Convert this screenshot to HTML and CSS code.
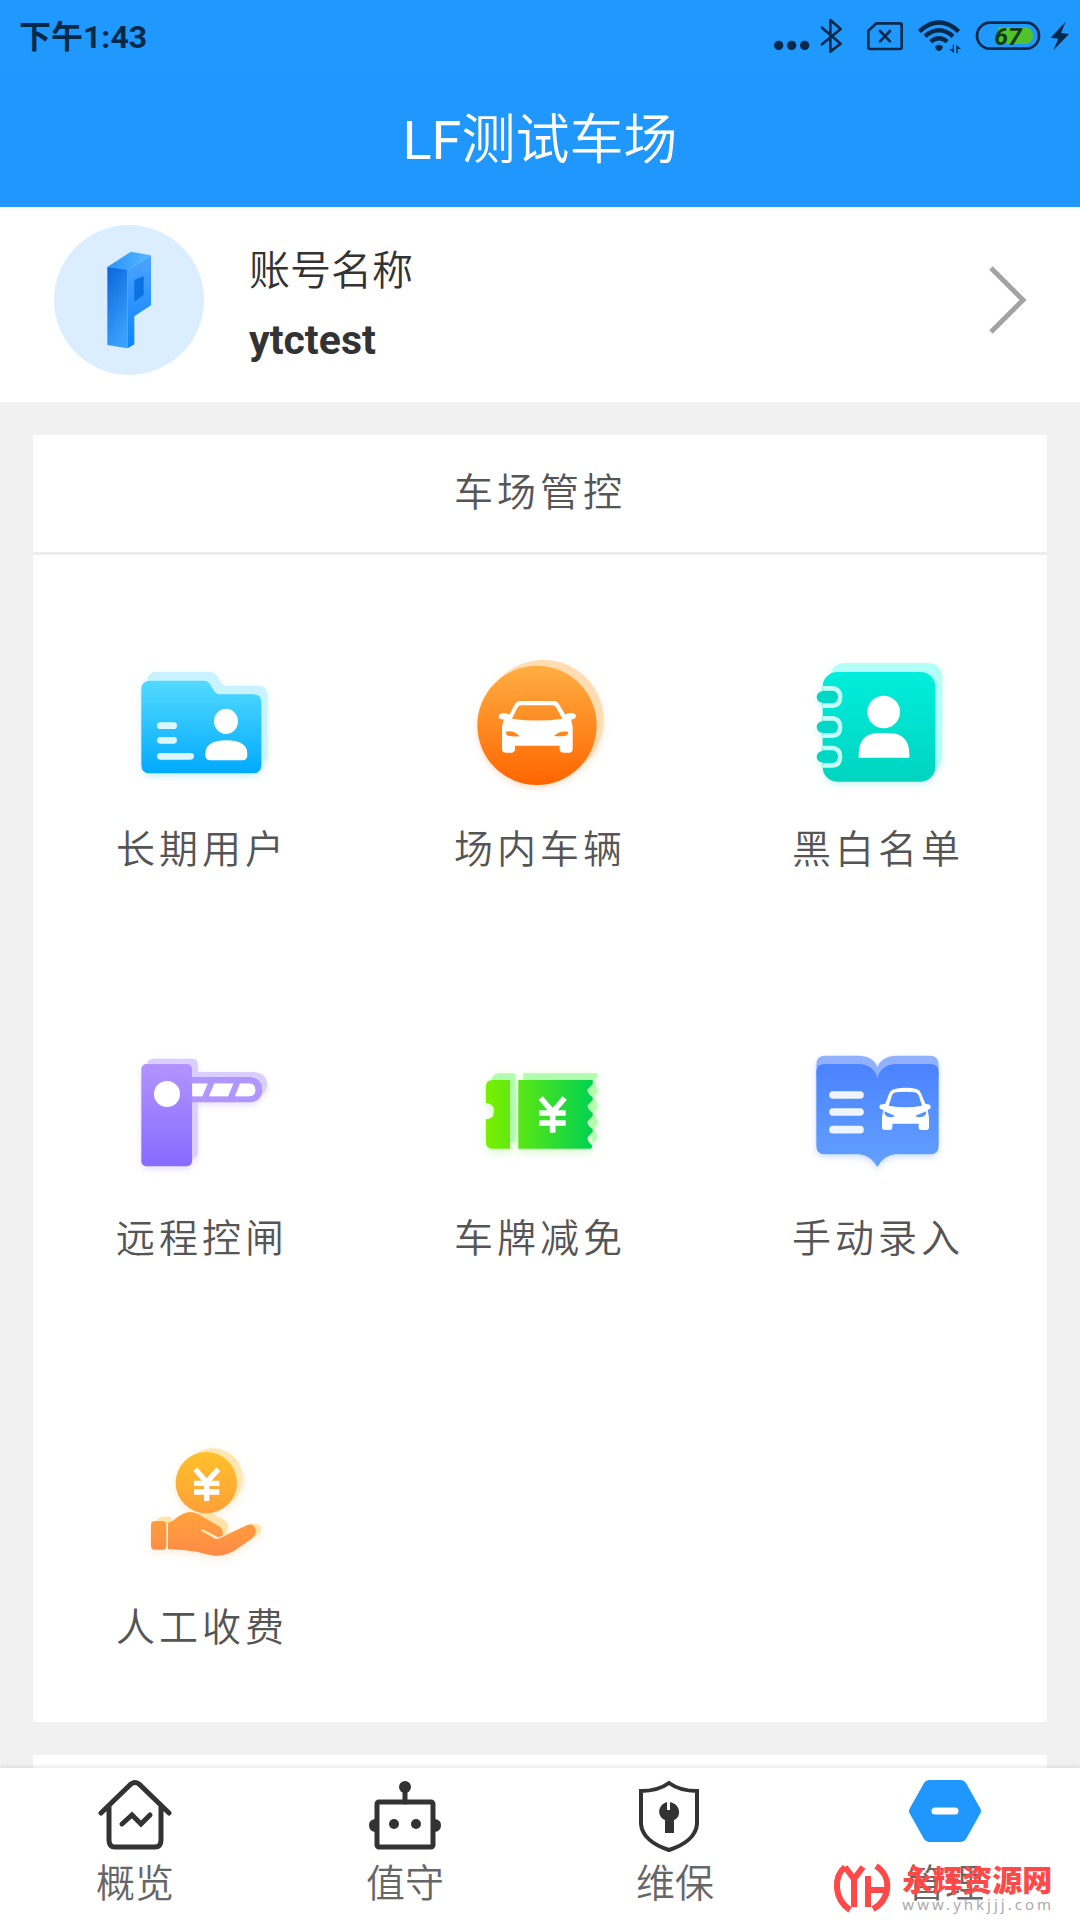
FILE: index.html
```html
<!DOCTYPE html>
<html lang="zh-CN">
<head>
	<meta charset="utf-8">
	<meta name="viewport" content="width=device-width, initial-scale=1">
	<title>LF测试车场</title>
	<link rel="stylesheet" href="styles.css">
</head>
<body>
	<div class="status">
		<span class="time">下午1:43</span>
		<div class="status-icons">
			<svg width="40" height="34" viewBox="90 57 120 102"><circle cx="116" cy="136" r="14"/><circle cx="155" cy="136" r="14"/><circle cx="194" cy="136" r="14"/></svg>
			<svg width="36" height="34" viewBox="234 57 108 102"><path class="line" d="M246 83L302 131L271 155V60L302 87L246 133"/></svg>
			<svg width="46" height="34" viewBox="366 57 138 102"><path class="line" d="M409 70H480Q485 70 485 75V142Q485 147 480 147H390Q385 147 385 142V92ZM420 93L450 124M450 93L420 124"/></svg>
			<svg width="50" height="34" viewBox="528 57 150 102">
				<path class="wave" d="M538 94Q597 41 656 94M555 109Q597 73 639 109M572 125Q597 104 622 125"/>
				<path d="M585 140Q597 129 609 140Q605 153 597 153Q589 153 585 140ZM638 134H642V160L628 147H638ZM649 160V134L663 147H653V160Z"/>
			</svg>
			<svg width="68" height="34" viewBox="702 57 204 102">
				<path class="charge" d="M775 81H850Q879 81 879 107Q879 132 850 132H770Z"/>
				<rect class="line" x="711" y="68" width="186" height="78" rx="39"/>
				<text class="level" x="763" y="134">67</text>
			</svg>
			<svg width="20" height="34" viewBox="930 57 60 102"><path d="M978 64L932 113L955 116L940 151L987 102L963 99Z"/></svg>
		</div>
	</div>
	<header class="navbar">
		<h1><span>LF</span>测试车场</h1>
	</header>

	<main>
		<a class="profile" href="#account">
			<svg class="avatar" viewBox="162 675 450 450">
				<defs>
					<linearGradient id="pSide" x2=".4" y2="1"><stop offset="0" stop-color="#0966dc"/><stop offset="1" stop-color="#3a9ffb"/></linearGradient>
					<linearGradient id="pFront" x2="0" y2="1"><stop offset="0" stop-color="#4fa4ff"/><stop offset="1" stop-color="#0a84fc"/></linearGradient>
					<linearGradient id="pTop" x2="1" y2="0"><stop offset="0" stop-color="#2d92f8"/><stop offset="1" stop-color="#51b9ff"/></linearGradient>
				</defs>
				<circle cx="387" cy="900" r="225" fill="#dbeeff"/>
				<path d="M322 801L383 808V1045L322 1035Z" fill="url(#pSide)"/>
				<path d="M322 801L393 755L453 766L383 810Z" fill="url(#pTop)"/>
				<path d="M383 810L453 766V916L403 949V1033L383 1045Z" fill="url(#pFront)"/>
				<path d="M403 840L431 828V885L403 905Z" fill="#0a72e2"/>
			</svg>
			<div class="account">
				<div>账号名称</div>
				<strong>ytctest</strong>
			</div>
			<svg class="chevron" viewBox="0 0 36 66"><path d="M1 1L33 33L1 65"/></svg>
		</a>

		<section class="card">
			<h2>车场管控</h2>
			<nav class="tiles">
				<a class="tile" href="#users">
					<svg class="glow-blue" viewBox="57 30 378 378">
						<defs><linearGradient id="folder" x2="0" y2="1"><stop offset="0" stop-color="#53daff"/><stop offset="1" stop-color="#00aaff"/></linearGradient></defs>
						<path d="M106 66H270Q283 66 292 80L301 96Q307 107 320 107H413Q441 107 441 134V320L424 350L82 92Q84 66 106 66Z" fill="#c9f2ff"/>
						<path d="M90 92H252Q263 92 269 101L282 122Q289 133 300 133H399Q424 133 424 158V344Q424 370 398 370H90Q64 370 64 344V118Q64 92 90 92Z" fill="url(#folder)"/>
						<path d="M121 227H161M121 271H161M121 319H212" stroke="#dcf6ff" stroke-width="20" stroke-linecap="round"/>
						<ellipse cx="318" cy="214" rx="36" ry="38" fill="#fff"/>
						<path d="M271 331Q256 331 256 315Q254 271 319 271Q384 271 382 315Q382 331 367 331Z" fill="#fff"/>
					</svg>
					<span>长期用户</span>
				</a>
				<a class="tile" href="#cars">
					<svg class="glow-orange" viewBox="81 60 378 378">
						<defs><linearGradient id="disc" x2="0" y2="1"><stop offset="0" stop-color="#ffaf43"/><stop offset="1" stop-color="#ff6500"/></linearGradient></defs>
						<circle cx="280" cy="240" r="180" fill="#ffdcb2"/>
						<circle cx="261" cy="256" r="179" fill="url(#disc)"/>
						<path fill="#fff" fill-rule="evenodd" d="M210 183H311Q321 183 327 193L346 224Q353 217 368 220Q380 222 377 232Q374 239 363 238L368 260V327Q368 338 357 338H341Q329 338 329 327V317H195V327Q195 338 183 338H168Q156 338 156 327V260L161 238Q148 239 146 231Q145 222 158 220Q172 218 178 224L195 192Q200 183 210 183ZM215 196Q206 196 202 203L186 236Q262 247 337 236L319 203Q315 196 307 196ZM168 275Q192 269 209 289Q186 290 174 287Q166 284 168 275ZM354 275Q328 272 312 288Q330 290 347 287Q355 284 354 275Z"/>
					</svg>
					<span>场内车辆</span>
				</a>
				<a class="tile" href="#lists">
					<svg class="glow-teal" viewBox="75 60 378 378">
						<defs><linearGradient id="book" x2="0" y2="1"><stop offset="0" stop-color="#00eedc"/><stop offset="1" stop-color="#00d4c0"/></linearGradient></defs>
						<path d="M165 69H411Q456 69 456 114V350Q456 371 436 388L122 100Q132 69 165 69Z" fill="#b3fff8"/>
						<rect x="98" y="96" width="338" height="329" rx="44" fill="url(#book)"/>
						<g fill="#00dac8" stroke="#c5fff8" stroke-width="14"><path d="M98 145H128Q150 147 150 171Q150 196 128 197H98M98 235H128Q150 237 150 261Q150 286 128 287H98M98 324H128Q150 326 150 350Q150 375 128 376H98"/></g>
						<path d="M97 171H127M97 261H127M97 350H127" stroke="#00d8c5" stroke-width="34" stroke-linecap="round"/>
						<circle cx="281" cy="216" r="49" fill="#fff"/>
						<path d="M206 353V343Q206 279 268 279H296Q358 279 358 343V353Z" fill="#fff"/>
					</svg>
					<span>黑白名单</span>
				</a>
				<a class="tile" href="#gate">
					<svg class="glow-purple" viewBox="87 57 378 378">
						<defs><linearGradient id="gate" x2="0" y2="1"><stop offset="0" stop-color="#b294ff"/><stop offset="1" stop-color="#876aff"/></linearGradient></defs>
						<path d="M130 86H247Q263 86 263 101V126H430Q471 129 471 164Q471 182 453 196L263 180V375L246 392L111 104Q113 86 130 86Z" fill="#dacdff"/>
						<rect x="94" y="102" width="152" height="307" rx="15" fill="url(#gate)"/>
						<path fill="#b196ff" fill-rule="evenodd" d="M245 141H420Q456 144 456 180Q456 214 420 217H245ZM245 160V199H277L293 160ZM313 160L297 199H354L370 160ZM390 160L375 199H418Q436 198 436 180Q436 161 418 160Z"/>
						<path fill="#fff" d="M247 161V199H277L293 161ZM313 161L297 199H354L370 161ZM390 161L375 199H418Q436 198 436 180Q436 161 418 161Z"/>
						<circle cx="171" cy="192" r="39" fill="#fff"/>
					</svg>
					<span>远程控闸</span>
				</a>
				<a class="tile" href="#coupon">
					<svg class="glow-green" viewBox="51 57 378 378">
						<defs><linearGradient id="ticket" gradientUnits="userSpaceOnUse" x1="78" y1="0" x2="398" y2="0"><stop offset="0" stop-color="#7af000"/><stop offset=".4" stop-color="#4ee41d"/><stop offset="1" stop-color="#00d250"/></linearGradient></defs>
						<path d="M116 130H165V336H140V150H95Q98 130 116 130ZM190 130H412V140L398 155Q425 180 398 202Q425 229 398 249Q425 279 398 299Q425 326 398 338L380 200V150H190Z" fill="#b3fbae"/>
						<path d="M97 150H150V356H97Q78 356 78 337V268Q102 267 102 243Q102 221 78 220V169Q78 150 97 150ZM175 150H398V163L383 178Q379 188 398 202V210L383 226Q381 236 398 249V258L383 274Q381 286 398 297V306L383 322Q381 333 396 346V352L392 356H175Z" fill="url(#ticket)"/>
						<path d="M242 204L278 246L314 204M278 246V308M237 249H317M237 279H317" fill="none" stroke="#fff" stroke-width="17"/>
					</svg>
					<span>车牌减免</span>
				</a>
				<a class="tile" href="#entry">
					<svg class="glow-indigo" viewBox="75 57 378 378">
						<defs><linearGradient id="manual" x2="0" y2="1"><stop offset="0" stop-color="#4b83ff"/><stop offset="1" stop-color="#62a0ff"/></linearGradient></defs>
						<path d="M105 77H208Q252 80 262 112Q273 80 315 77H419Q446 77 446 104V140H79V104Q79 77 105 77Z" fill="#91b1ff"/>
						<path d="M105 102H208Q253 105 262 144Q272 105 315 102H419Q446 102 446 125V347Q446 373 419 373H315Q282 376 262 411Q242 376 208 373H105Q79 373 79 347V125Q79 102 105 102Z" fill="url(#manual)"/>
						<path d="M129 195H210M129 246H210M129 299H210" stroke="#eef5ff" stroke-width="23" stroke-linecap="round"/>
						<path fill="#fff" fill-rule="evenodd" d="M314 177Q347 169 380 177Q389 180 393 190L406 221L420 224Q424 230 420 236L413 240L417 262V292Q417 300 409 300H393Q386 300 386 292V281H307V292Q307 300 299 300H284Q276 300 276 292V262L280 240L270 236Q266 230 270 224L286 221L298 189Q302 180 314 177ZM317 187Q309 188 306 196L296 227Q346 236 396 227L386 196Q382 188 374 187Q346 183 317 187ZM283 244L314 257Q309 265 289 259Q282 253 283 244ZM409 244L376 257Q384 265 402 259Q410 252 409 244Z"/>
					</svg>
					<span>手动录入</span>
				</a>
				<a class="tile" href="#charge">
					<svg class="glow-gold" viewBox="87 54 378 378">
						<defs>
							<linearGradient id="coin" x2="0" y2="1"><stop offset="0" stop-color="#fec12b"/><stop offset="1" stop-color="#ff9f38"/></linearGradient>
							<linearGradient id="hand" x2="0" y2="1"><stop offset="0" stop-color="#ffa23b"/><stop offset="1" stop-color="#ff8a46"/></linearGradient>
						</defs>
						<circle cx="308" cy="176" r="91" fill="#ffe6b2"/>
						<path d="M139 303Q147 290 160 290H183L187 305L220 278L300 278L342 300Q359 310 354 326L345 343L420 313Q448 306 454 325Q454 340 435 350L300 345Z" fill="#ffe3a8"/>
						<circle cx="289" cy="188" r="92" fill="url(#coin)"/>
						<path d="M256 148L290 187L325 148M290 187V243M252 190H328M252 216H328" fill="none" stroke="#fff" stroke-width="16"/>
						<path d="M135 303H158Q169 303 169 314V377Q169 389 158 389H135Q123 389 123 377V314Q123 303 135 303ZM174 308Q184 306 191 300Q208 285 228 278Q243 272 264 282L331 321Q342 330 337 349L323 351L279 328Q271 327 274 333L312 354Q320 360 336 352L406 318Q430 306 437 328Q439 344 425 356L373 392Q343 409 313 407Q289 404 264 396Q220 388 174 387Z" fill="url(#hand)"/>
					</svg>
					<span>人工收费</span>
				</a>
			</nav>
		</section>
		<section class="card next"></section>
	</main>

	<nav class="tabbar">
		<a href="#overview">
			<svg viewBox="0 0 72 74">
				<path class="stroke" d="M2 33L32 4Q36 1 40 4L70 33M10 27V60Q10 67 16 67H56Q62 67 62 60V27"/>
				<path class="stroke" d="M23 44L33 35L42 44L51 35"/>
			</svg>
			<span>概览</span>
		</a>
		<a href="#duty">
			<svg viewBox="0 0 72 74">
				<rect class="stroke" x="8" y="22" width="56" height="45" rx="2"/>
				<path class="stroke" d="M36 7V22"/>
				<circle cx="36" cy="7" r="6"/><circle cx="25" cy="44" r="5"/><circle cx="47" cy="44" r="5"/>
				<path d="M6 39Q0 40 0 45Q0 51 6 52ZM66 39Q72 40 72 45Q72 51 66 52Z"/>
			</svg>
			<span>值守</span>
		</a>
		<a href="#maintain">
			<svg viewBox="6 0 72 74">
				<path class="stroke sharp" d="M36 3Q25 11 8 11V44C9 56 20 65 36 70C52 65 63 56 64 44V11Q47 11 36 3Z"/>
				<path d="M34 22V30H37V22C49 25 48 38 41 40V53H32V40C24 37 24 25 34 22Z"/>
			</svg>
			<span>维保</span>
		</a>
		<a href="#manage">
			<svg viewBox="0 0 72 74">
				<path d="M20 0H52Q55 0 57 3L71 28Q73 31 71 34L57 59Q55 62 52 62H20Q17 62 15 59L1 34Q-1 31 1 28L15 3Q17 0 20 0Z" fill="#1f97fc"/>
				<path d="M26 31H46" stroke="#fff" stroke-width="7" stroke-linecap="round"/>
			</svg>
			<span>管理</span>
		</a>
		<div class="watermark">
			<svg width="54" height="48" viewBox="0 0 54 48"><path d="M10 3C-2 13 -1 35 15 46M10 3L19 15L28 3M19 15V43M41 2C57 12 56 35 38 45M33 12V43M33 26H50"/></svg>
			<div>
				<b>永辉资源网</b>
				<small>www.yhkjjj.com</small>
			</div>
		</div>
	</nav>
</body>
</html>
```
FILE: styles.css
```css
* {
	box-sizing: border-box;
}
body {
	display: flex;
	flex-direction: column;
	height: 100vh;
	margin: 0;
	background-color: #f1f1f1;
	font-family: Roboto, "Noto Sans CJK SC", sans-serif;
	font-size: 39px;
	font-weight: 350;
}
svg {
	display: block;
	flex: none;
	overflow: visible;
}
a {
	color: inherit;
	text-decoration: none;
}
h1, h2 {
	margin: 0;
	font-weight: inherit;
}

/* 状态栏 */
.status {
	display: flex;
	justify-content: space-between;
	align-items: center;
	height: 72px;
	padding: 0 10px 0 19px;
	background-color: #2099ff;
	color: #06294a;
	fill: #06294a;
}
.time {
	padding-bottom: 4px;
	font-size: 32px;
	font-weight: 700;
}
.status-icons {
	display: flex;
	gap: 8px;
}
.line {
	fill: none;
	stroke: #06294a;
	stroke-width: 8;
	stroke-linejoin: round;
	stroke-linecap: round;
}
.wave {
	fill: none;
	stroke: #06294a;
	stroke-width: 13;
}
.charge {
	fill: #52c22b;
}
.level {
	fill: #0b3c1e;
	font-size: 74px;
	font-style: italic;
	font-weight: 700;
}

.navbar {
	height: 135px;
	background-color: #1f97fc;
	color: #fff;
	text-align: center;
}
.navbar h1 {
	font-size: 54px;
	line-height: 138px;
}
.navbar span {
	font-weight: 400;
}

main {
	flex: 1;
	min-height: 0;
	overflow-y: auto;
	scrollbar-width: none;
}
.profile {
	display: flex;
	align-items: center;
	padding: 18px 54px 27px;
	background-color: #fff;
	color: #333;
}
.avatar {
	width: 150px;
	height: 150px;
}
.account {
	flex: 1;
	padding: 12px 0 0 45px;
	font-size: 41px;
	line-height: 69px;
}
.account strong {
	display: block;
	font-weight: 700;
}
.chevron {
	width: 36px;
	height: 66px;
	fill: none;
	stroke: #a3a3a3;
	stroke-width: 5;
}

/* 功能卡片 */
.card {
	margin: 33px;
	background-color: #fff;
	color: #555;
	letter-spacing: 4px;
}
.card h2 {
	border-bottom: 3px solid #ededed;
	font-size: 39px;
	line-height: 117px;
	text-align: center;
}
.next {
	height: 120px;
}
.tiles {
	display: grid;
	grid-template-columns: repeat(3, 1fr);
}
.tile {
	display: flex;
	flex-direction: column;
	align-items: center;
	gap: 36px;
	padding: 105px 0 66px;
	line-height: 56px;
}
.tile svg {
	width: 126px;
	height: 126px;
}
.glow-blue { filter: drop-shadow(0 3px 3px #00aaff33); }
.glow-orange { filter: drop-shadow(0 3px 3px #ff650033); }
.glow-teal { filter: drop-shadow(0 3px 3px #00d4c033); }
.glow-purple { filter: drop-shadow(0 3px 3px #876aff33); }
.glow-green { filter: drop-shadow(0 3px 4px #4ee41d44); }
.glow-indigo { filter: drop-shadow(0 3px 3px #4b83ff44); }
.glow-gold { filter: drop-shadow(0 3px 4px #ffa23b33); }

/* 底部导航 */
.tabbar {
	position: relative;
	display: flex;
	height: 152px;
	background-color: #fff;
	box-shadow: 0 0 6px rgba(0,0,0,.15);
	color: #666;
}
.tabbar a {
	display: flex;
	flex: 1;
	flex-direction: column;
	align-items: center;
	padding-top: 12px;
	line-height: 60px;
}
.tabbar a svg {
	width: 72px;
	height: 74px;
	fill: #333;
}
.tabbar .stroke {
	fill: none;
	stroke: #333;
	stroke-width: 5;
	stroke-linecap: round;
}
.tabbar .sharp {
	stroke-width: 4;
}
.watermark {
	position: absolute;
	right: 26px;
	bottom: 8px;
	display: flex;
	align-items: flex-end;
	gap: 13px;
	color: #ff4848;
}
.watermark svg {
	fill: none;
	stroke: #ff4848;
	stroke-width: 6;
}
.watermark b {
	display: block;
	font-size: 30px;
	font-weight: 900;
	line-height: 30px;
}
.watermark small {
	display: block;
	color: #aaa;
	font-family: "Noto Sans", sans-serif;
	font-size: 15px;
	font-weight: 400;
	letter-spacing: 3px;
	line-height: 16px;
}
```
